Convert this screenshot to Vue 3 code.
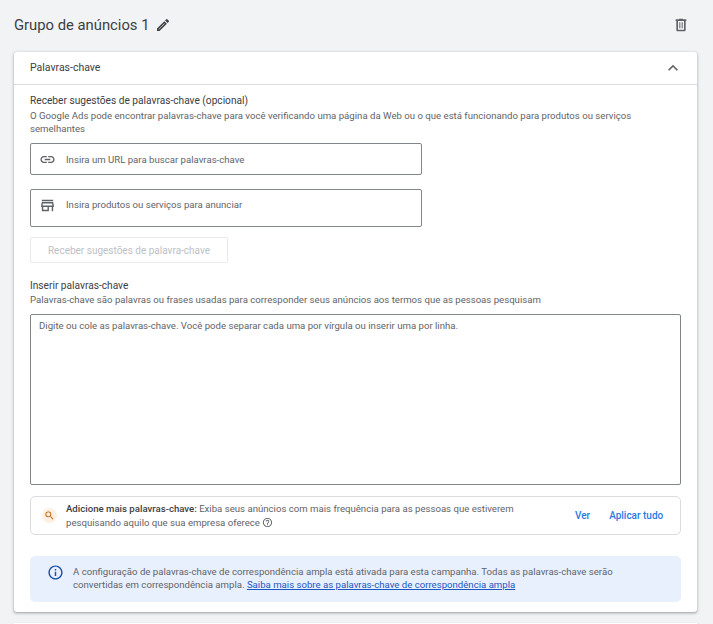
<script setup>
const title = 'Grupo de anúncios 1'
</script>

<template>
  <div class="page">
    <header class="top">
      <div class="heading">
        <h1>{{ title }}</h1>
        <svg class="pencil" viewBox="0 0 24 24" width="16" height="16"><path d="M3 17.25V21h3.75L17.81 9.94l-3.75-3.75L3 17.25zm2.300 1.450v-.500l8.760-8.760.500.500L5.800 18.700h-.500zM20.71 7.04a1 1 0 0 0 0-1.41l-2.34-2.34a1 1 0 0 0-1.41 0l-1.83 1.83 3.75 3.75 1.83-1.83z" fill-rule="evenodd"/></svg>
      </div>
      <svg class="trash" viewBox="0 0 24 24" width="16" height="16"><path d="M15 3.5V2.5H9v1H4v2.5h1v13.5c0 1.100.9 2 2 2h10c1.100 0 2-.9 2-2V6h1V3.500h-5zm1.500 15.500h-9V6h9v13zM9.500 8H11v9H9.500V8zM13 8h1.500v9H13V8z"/></svg>
    </header>

    <section class="card">
      <div class="card-head">
        <span class="head-title">Palavras-chave</span>
        <svg viewBox="0 0 24 24" width="20" height="20"><path d="M7.41 15.41 12 10.83l4.59 4.58L18 14l-6-6-6 6z"/></svg>
      </div>
      <div class="card-body">
        <h2 class="first">Receber sugestões de palavras-chave (opcional)</h2>
        <p class="desc">O Google Ads pode encontrar palavras-chave para você verificando uma página da Web ou o que está funcionando para produtos ou serviços semelhantes</p>

        <div class="field url">
          <svg viewBox="0 0 24 24" width="17" height="17"><path d="M3.9 12c0-1.71 1.39-3.1 3.1-3.1h4V7H7c-2.76 0-5 2.24-5 5s2.240 5 5 5h4v-1.900H7c-1.710 0-3.100-1.390-3.100-3.100zM8 13h8v-2H8v2zm9-6h-4v1.900h4c1.710 0 3.100 1.390 3.100 3.100s-1.390 3.100-3.100 3.100h-4V17h4c2.760 0 5-2.240 5-5s-2.240-5-5-5z"/></svg>
          <span>Insira um URL para buscar palavras-chave</span>
        </div>
        <div class="field product">
          <svg viewBox="0 0 24 24" width="17" height="17"><path d="M20 4H4v2h16V4zm1 10v-2l-1-5H4l-1 5v2h1v6h10v-6h4v6h2v-6h1zm-9 4H6v-4h6v4zm-7-6 .6-3h12.8l.6 3H5z"/></svg>
          <span>Insira produtos ou serviços para anunciar</span>
        </div>
        <div class="btn">Receber sugestões de palavra-chave</div>

        <h2 class="second">Inserir palavras-chave</h2>
        <p class="desc">Palavras-chave são palavras ou frases usadas para corresponder seus anúncios aos termos que as pessoas pesquisam</p>
        <div class="area">Digite ou cole as palavras-chave. Você pode separar cada uma por vírgula ou inserir uma por linha.</div>

        <div class="suggest">
          <span class="badge">
            <svg viewBox="0 0 24 24" width="11" height="11"><path d="M15.5 14h-.79l-.28-.27A6.47 6.47 0 0 0 16 9.5 6.5 6.5 0 1 0 9.5 16c1.61 0 3.09-.59 4.23-1.57l.27.28v.79l5 4.99L20.49 19l-4.99-5zm-6 0C7.01 14 5 11.99 5 9.5S7.01 5 9.5 5 14 7.01 14 9.5 11.99 14 9.5 14z"/></svg>
          </span>
          <p><b>Adicione mais palavras-chave:</b> Exiba seus anúncios com mais frequência para as pessoas que estiverem pesquisando aquilo que sua empresa oferece
            <svg class="help" viewBox="0 0 24 24" width="11" height="11"><path d="M11 18h2v-2h-2v2zm1-16C6.48 2 2 6.48 2 12s4.48 10 10 10 10-4.48 10-10S17.52 2 12 2zm0 18c-4.41 0-8-3.59-8-8s3.59-8 8-8 8 3.59 8 8-3.59 8-8 8zm0-14c-2.21 0-4 1.79-4 4h2c0-1.1.9-2 2-2s2 .9 2 2c0 2-3 1.75-3 5h2c0-2.25 3-2.5 3-5 0-2.21-1.79-4-4-4z"/></svg>
          </p>
          <a class="act">Ver</a>
          <a class="act">Aplicar tudo</a>
        </div>

        <div class="info">
          <svg viewBox="0 0 24 24" width="17" height="17"><path d="M11 7h2v2h-2V7zm0 4h2v6h-2v-6zm1-9C6.48 2 2 6.48 2 12s4.48 10 10 10 10-4.48 10-10S17.52 2 12 2zm0 18c-4.41 0-8-3.59-8-8s3.59-8 8-8 8 3.59 8 8-3.59 8-8 8z"/></svg>
          <p>A configuração de palavras-chave de correspondência ampla está ativada para esta campanha. Todas as palavras-chave serão convertidas em correspondência ampla. <a>Saiba mais sobre as palavras-chave de correspondência ampla</a></p>
        </div>
      </div>
    </section>
    <div class="next"></div>
  </div>
</template>

<style>
html, body { margin: 0; background: #f1f3f4; }
</style>

<style scoped>
.page {
  width: 713px;
  height: 624px;
  overflow: hidden;
  box-sizing: border-box;
  padding: 0 16px 0 14px;
  background: #f1f3f4;
  font-family: Roboto, "Liberation Sans", sans-serif;
  font-size: 9.62px;
  color: #5f6368;
}
.top {
  box-sizing: border-box;
  height: 52px;
  padding: 0 8px 2px 0;
  display: flex;
  align-items: center;
  justify-content: space-between;
}
.heading { display: flex; align-items: center; gap: 6px; }
h1 { margin: 0; font-size: 14.8px; font-weight: 400; color: #3c4043; }
.pencil { fill: #3c4043; }
.trash { fill: #5f6368; }
.card {
  background: #fff;
  border-radius: 3px;
  box-shadow: 0 1px 2px rgba(60,64,67,.3), 0 1px 3px 1px rgba(60,64,67,.15);
  height: 560px;
}
.card-head {
  height: 32px;
  display: flex;
  align-items: center;
  justify-content: space-between;
  padding: 0 14px 0 16px;
  border-bottom: 1px solid #dadce0;
  font-size: 10.5px;
  color: #3c4043;
}
.head-title { margin-top: -2px; }
.card-head svg { fill: #5f6368; }
.card-body { padding: 9px 16px 0; }
h2 { margin: 0; font-size: 10.17px; font-weight: 400; line-height: 13px; color: #3c4043; }
.first { margin-bottom: 2px; }
.second { margin: 16px 0 1px; }
.desc { margin: 0; line-height: 13px; }
.field {
  box-sizing: border-box;
  width: 392px;
  display: flex;
  gap: 10px;
  padding: 0 8px;
  border: 1px solid #80868b;
  border-radius: 2px;
}
.field svg { fill: #5f6368; flex: none; }
.url { height: 32px; margin-top: 8px; align-items: center; }
.url span { margin-top: 1px; }
.product { height: 38px; margin-top: 14px; align-items: flex-start; padding-top: 7px; }
.product span { margin-top: 2px; }
.btn {
  box-sizing: border-box;
  width: 198px;
  height: 26px;
  margin-top: 10px;
  border: 1px solid #e8eaed;
  border-radius: 2px;
  display: flex;
  align-items: center;
  justify-content: center;
  color: #bdc1c6;
  font-size: 10px;
}
.area {
  box-sizing: border-box;
  height: 171px;
  margin-top: 8px;
  padding: 5px 8px;
  border: 1px solid #80868b;
  border-radius: 2px;
}
.suggest {
  box-sizing: border-box;
  height: 39px;
  margin-top: 11px;
  display: flex;
  align-items: center;
  border: 1px solid #dadce0;
  border-radius: 5px;
  padding: 0 17px 0 11px;
}
.badge {
  flex: none;
  width: 15px;
  height: 15px;
  border-radius: 50%;
  background: #feefe3;
  display: flex;
  align-items: center;
  justify-content: center;
  margin-right: 9px;
}
.badge svg { fill: #b06000; }
.suggest p { margin: 0; flex: none; width: 480px; line-height: 14px; }
.suggest b { font-weight: 500; color: #3c4043; }
.help { fill: #5f6368; vertical-align: -2px; }
.act { flex: none; white-space: nowrap; color: #2a7ae2; font-weight: 500; font-size: 10px; }
.act:first-of-type { margin-left: 29px; }
.act + .act { margin-left: 19px; }
.info {
  box-sizing: border-box;
  height: 46px;
  margin-top: 21px;
  display: flex;
  gap: 9px;
  padding: 8px 17px;
  background: #e8f0fe;
  border-radius: 5px;
}
.info svg { fill: #174ea6; flex: none; }
.info p { margin: 1px 0 0; line-height: 13px; width: 560px; }
.info a { color: #1a56c4; text-decoration: underline; }
.next {
  height: 20px;
  margin-top: 11px;
  background: #fff;
  box-shadow: 0 1px 2px rgba(60,64,67,.3);
}
</style>
